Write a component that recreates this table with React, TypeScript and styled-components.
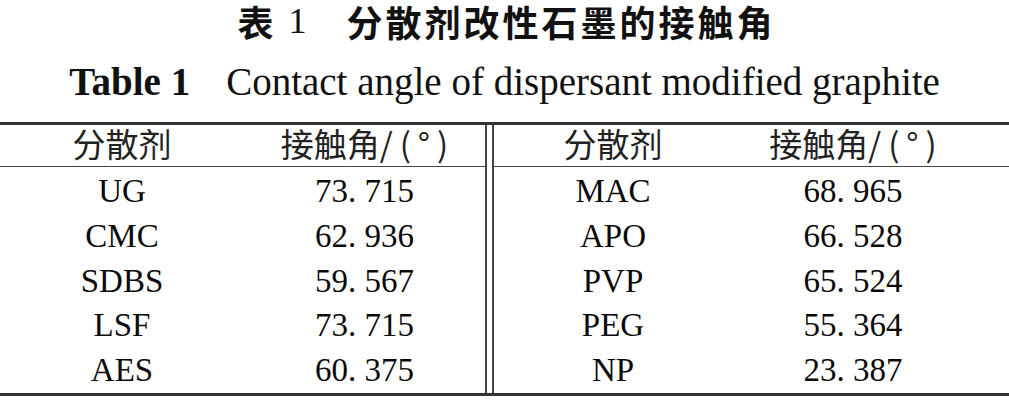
import styled, { createGlobalStyle } from "styled-components";

const GlobalStyle = createGlobalStyle`
  html, body {
    margin: 0;
    padding: 0;
    background: #fff;
  }
  body {
    font-family: "Liberation Serif", "Noto Sans CJK SC", serif;
    color: #111;
  }
`;

const Page = styled.div`
  width: 1009px;
  height: 402px;
  overflow: hidden;
  display: flex;
  flex-direction: column;
`;

const CnTitle = styled.h1`
  margin: 0;
  height: 44px;
  line-height: 1.2;
  display: flex;
  justify-content: center;
  align-items: center;
  font-family: "Noto Sans CJK SC", sans-serif;
  font-weight: 700;
  font-size: 36px;
  letter-spacing: 3px;
  padding-left: 4px;
  white-space: nowrap;
`;

const TitleNo = styled.span`
  font-family: "Liberation Serif", serif;
  font-weight: 400;
  margin: 0 40px 0 12px;
  letter-spacing: 0;
`;

const EnTitle = styled.h2`
  margin: 0;
  height: 78px;
  line-height: 1.2;
  display: flex;
  justify-content: center;
  align-items: center;
  font-family: "Liberation Serif", serif;
  font-weight: 400;
  font-size: 39px;
  padding-bottom: 2px;
  box-sizing: border-box;
  b {
    font-weight: 700;
    margin-right: 36px;
  }
`;

const Table = styled.div`
  display: flex;
  border-top: 3px solid #333;
  border-bottom: 3px solid #333;
`;

const Half = styled.div<{ $cols: string }>`
  display: grid;
  grid-template-columns: ${(p) => p.$cols};
  grid-auto-rows: 44.6px;
  flex: ${(p) => (p.$cols.includes("fr") ? 1 : "none")};
`;

const Divider = styled.div`
  width: 5px;
  border-left: 2px solid #444;
  border-right: 2px solid #444;
`;

const Head = styled.div`
  height: 42px;
  display: flex;
  align-items: center;
  justify-content: center;
  padding-bottom: 3px;
  box-sizing: border-box;
  border-bottom: 1.5px solid #444;
  font-family: "Noto Sans CJK SC", sans-serif;
  font-weight: 400;
  font-size: 33px;
  line-height: 1.2;
  color: #222;
  span {
    letter-spacing: 7px;
    margin-right: -7px;
  }
`;

const Cell = styled.div`
  display: flex;
  align-items: center;
  justify-content: center;
  font-size: 33px;
  color: #0a0a0a;
`;

const left = [
  ["UG", "73. 715"],
  ["CMC", "62. 936"],
  ["SDBS", "59. 567"],
  ["LSF", "73. 715"],
  ["AES", "60. 375"],
];

const right = [
  ["MAC", "68. 965"],
  ["APO", "66. 528"],
  ["PVP", "65. 524"],
  ["PEG", "55. 364"],
  ["NP", "23. 387"],
];

function App() {
  return (
    <Page>
      <GlobalStyle />
      <CnTitle>
        表<TitleNo>1</TitleNo>分散剂改性石墨的接触角
      </CnTitle>
      <EnTitle>
        <b>Table 1</b>Contact angle of dispersant modified graphite
      </EnTitle>
      <Table>
        <Half $cols="244px 241px">
          <Head>分散剂</Head>
          <Head>
            接触角<span>/(°)</span>
          </Head>
          {left.map(([name, val]) => (
            <>
              <Cell key={name}>{name}</Cell>
              <Cell key={name + "v"}>{val}</Cell>
            </>
          ))}
        </Half>
        <Divider />
        <Half $cols="238px 242px 1fr">
          <Head>分散剂</Head>
          <Head>
            接触角<span>/(°)</span>
          </Head>
          <Head />
          {right.map(([name, val]) => (
            <>
              <Cell key={name}>{name}</Cell>
              <Cell key={name + "v"}>{val}</Cell>
              <div key={name + "b"} />
            </>
          ))}
        </Half>
      </Table>
    </Page>
  );
}

export default App;
